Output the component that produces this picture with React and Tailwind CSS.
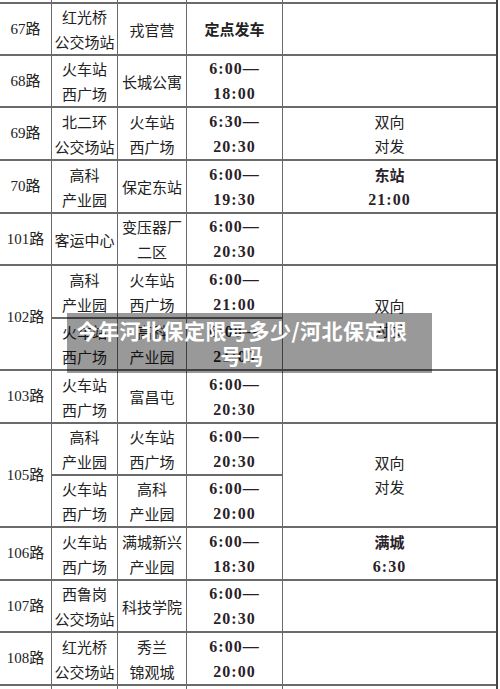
import React from "react";

const serif = "font-['Liberation_Serif','Noto_Sans_CJK_SC',serif]";

const rows = [
  { no: "67路", from: ["红光桥", "公交场站"], to: ["戎官营"], time: null, head: "定点发车", note: null },
  { no: "68路", from: ["火车站", "西广场"], to: ["长城公寓"], time: ["6:00—", "18:00"], note: null },
  { no: "69路", from: ["北二环", "公交场站"], to: ["火车站", "西广场"], time: ["6:30—", "20:30"], note: { text: ["双向", "对发"] } },
  { no: "70路", from: ["高科", "产业园"], to: ["保定东站"], time: ["6:00—", "19:30"], note: { bold: "东站", time: "21:00" } },
  { no: "101路", from: ["客运中心"], to: ["变压器厂", "二区"], time: ["6:00—", "20:30"], note: null },
  {
    no: "102路",
    subs: [
      { from: ["高科", "产业园"], to: ["火车站", "西广场"], time: ["6:00—", "21:00"] },
      { from: ["火车站", "西广场"], to: ["高科", "产业园"], time: ["6:00—", "21:00"] },
    ],
    note: { text: ["双向", "对发"] },
  },
  { no: "103路", from: ["火车站", "西广场"], to: ["富昌屯"], time: ["6:00—", "20:30"], note: null },
  {
    no: "105路",
    subs: [
      { from: ["高科", "产业园"], to: ["火车站", "西广场"], time: ["6:00—", "20:30"] },
      { from: ["火车站", "西广场"], to: ["高科", "产业园"], time: ["6:00—", "20:00"] },
    ],
    note: { text: ["双向", "对发"] },
  },
  { no: "106路", from: ["火车站", "西广场"], to: ["满城新兴", "产业园"], time: ["6:00—", "18:30"], note: { bold: "满城", time: "6:30" } },
  { no: "107路", from: ["西鲁岗", "公交场站"], to: ["科技学院"], time: ["6:00—", "20:30"], note: null },
  { no: "108路", from: ["红光桥", "公交场站"], to: ["秀兰", "锦观城"], time: ["6:00—", "20:00"], note: null },
];

function Cell({ children, className = "" }) {
  return (
    <div className={`bg-white flex flex-col items-center justify-center text-center ${className}`}>
      {children}
    </div>
  );
}

function Lines({ lines }) {
  return (
    <Cell className="text-[15px] leading-[25px] text-[#222] font-['Noto_Sans_CJK_SC',sans-serif] whitespace-nowrap">
      {lines.map((l, i) => (
        <span key={i}>{l}</span>
      ))}
    </Cell>
  );
}

function Time({ lines }) {
  return (
    <Cell className={`${serif} font-bold text-[16px] leading-[25px] tracking-[1px] text-[#2a1f2a]`}>
      {lines.map((l, i) => (
        <span key={i}>{l}</span>
      ))}
    </Cell>
  );
}

function Note({ note, span }) {
  const cls = span ? "row-span-2" : "";
  if (!note) return <Cell className={cls} />;
  if (note.text) {
    return (
      <Cell className={`${cls} text-[15px] leading-[24px] text-[#222] font-['Noto_Sans_CJK_SC',sans-serif]`}>
        {note.text.map((t) => (
          <span key={t}>{t}</span>
        ))}
      </Cell>
    );
  }
  return (
    <Cell className={`${cls} leading-[25px] text-[#2a1f2a]`}>
      <span className="font-['Noto_Sans_CJK_SC',sans-serif] font-bold text-[15px]">{note.bold}</span>
      <span className={`${serif} font-bold text-[16px] tracking-[1px]`}>{note.time}</span>
    </Cell>
  );
}

export default function App() {
  return (
    <div className="relative w-[500px] h-[689px] overflow-hidden bg-white">
      <div className="w-[498px] grid grid-cols-[51px_65px_68px_95px_213px] grid-rows-[2px_50px_50px_51px_51px_50px_51px_50px_51px_50px_50px_51px_50px_51px_3px] gap-x-px gap-y-[2px] bg-[#6a6a6a] border-r-2 border-[#444]">
        {[0, 1, 2, 3, 4].map((i) => (
          <div key={"t" + i} className="bg-white" />
        ))}

        {rows.map((r) =>
          r.subs ? (
            <React.Fragment key={r.no}>
              <Cell className={`row-span-2 ${serif} text-[15px] text-[#222]`}>{r.no}</Cell>
              <Lines lines={r.subs[0].from} />
              <Lines lines={r.subs[0].to} />
              <Time lines={r.subs[0].time} />
              <Note note={r.note} span />
              <Lines lines={r.subs[1].from} />
              <Lines lines={r.subs[1].to} />
              <Time lines={r.subs[1].time} />
            </React.Fragment>
          ) : (
            <React.Fragment key={r.no}>
              <Cell className={`${serif} text-[15px] text-[#222]`}>{r.no}</Cell>
              <Lines lines={r.from} />
              <Lines lines={r.to} />
              {r.head ? (
                <Cell className="font-['Noto_Sans_CJK_SC',sans-serif] font-bold text-[15px] text-[#222]">
                  {r.head}
                </Cell>
              ) : (
                <Time lines={r.time} />
              )}
              <Note note={r.note} />
            </React.Fragment>
          )
        )}

        {[0, 1, 2, 3, 4].map((i) => (
          <div key={"b" + i} className="bg-white" />
        ))}
      </div>

      <div className="absolute left-[67px] top-[313px] w-[365px] h-[60px] bg-black/40 pl-[7px] flex items-center">
        <p className="w-[336px] text-center text-white font-bold text-[21px] leading-[25px] tracking-[0.5px] font-['Noto_Sans_CJK_SC',sans-serif]">
          今年河北保定限号多少/河北保定限号吗
        </p>
      </div>
    </div>
  );
}
